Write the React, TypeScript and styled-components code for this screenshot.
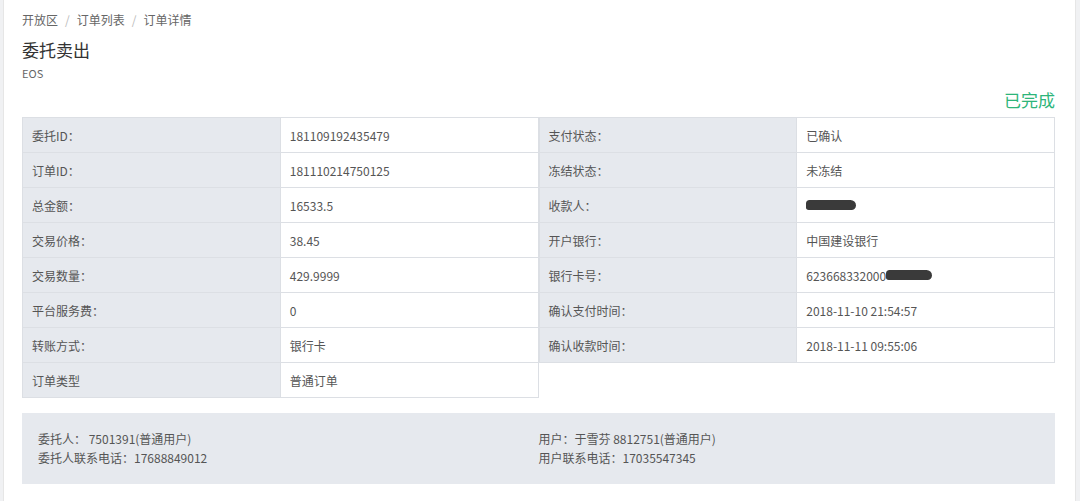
import { createGlobalStyle, styled } from "styled-components";

const GlobalStyle = createGlobalStyle`
  html, body {
    margin: 0;
    padding: 0;
    background: #f0f1f3;
  }
  body {
    font-family: "Noto Sans CJK SC", "Noto Sans", "Liberation Sans", sans-serif;
    color: #555;
  }
`;

const Page = styled.div`
  box-sizing: border-box;
  width: 1073px;
  min-height: 501px;
  margin-left: 3px;
  background: #fff;
  border-left: 1px solid #e6e6e6;
  border-right: 1px solid #e6e6e6;
  padding: 10px 20px 18px 18px;
`;

const Breadcrumb = styled.div`
  display: flex;
  align-items: center;
  font-size: 12px;
  line-height: 20px;
  color: #666;
`;

const Sep = styled.span`
  color: #bbb;
  margin: 0 7px;
`;

const Title = styled.h1`
  margin: 8px 0 0;
  font-size: 17px;
  font-weight: normal;
  line-height: 24px;
  color: #333;
`;

const Sub = styled.div`
  margin-top: 2px;
  font-size: 11px;
  line-height: 18px;
  color: #666;
`;

const StatusRow = styled.div`
  display: flex;
  justify-content: flex-end;
  align-items: flex-start;
  margin-top: 5px;
  height: 30px;
`;

const Status = styled.span`
  font-size: 17px;
  line-height: 26px;
  color: #2db57a;
`;

const Tables = styled.div`
  display: flex;
  align-items: flex-start;
`;

const Half = styled.div`
  flex: 1;
  border-top: 1px solid #dcdfe4;
  border-left: 1px solid #dcdfe4;
`;

const Row = styled.div`
  display: grid;
  grid-template-columns: 1fr 1fr;
  height: 34px;
  border-bottom: 1px solid #dcdfe4;
`;

const Label = styled.div`
  display: flex;
  align-items: center;
  padding: 0 9px;
  background: #e6e9ee;
  border-right: 1px solid #dcdfe4;
  font-size: 12px;
  color: #555;
`;

const Value = styled.div`
  display: flex;
  align-items: center;
  padding: 0 9px;
  background: #fff;
  border-right: 1px solid #dcdfe4;
  font-size: 12px;
  color: #555;
`;

const Redact = styled.span<{ $w: number }>`
  display: inline-block;
  width: ${(p) => p.$w}px;
  height: 10px;
  background: #3a3a3a;
  border-radius: 4px 6px 5px 3px;
`;

const Contacts = styled.div`
  display: grid;
  grid-template-columns: 1fr 1fr;
  margin-top: 15px;
  padding: 16px 16px 17px;
  background: #e6e9ee;
  font-size: 12px;
  line-height: 19px;
  color: #555;
`;

type Item = { label: string; value: React.ReactNode };

const left: Item[] = [
  { label: "委托ID：", value: "181109192435479" },
  { label: "订单ID：", value: "181110214750125" },
  { label: "总金额：", value: "16533.5" },
  { label: "交易价格：", value: "38.45" },
  { label: "交易数量：", value: "429.9999" },
  { label: "平台服务费：", value: "0" },
  { label: "转账方式：", value: "银行卡" },
  { label: "订单类型", value: "普通订单" },
];

const right: Item[] = [
  { label: "支付状态：", value: "已确认" },
  { label: "冻结状态：", value: "未冻结" },
  { label: "收款人：", value: <Redact $w={50} /> },
  { label: "开户银行：", value: "中国建设银行" },
  {
    label: "银行卡号：",
    value: (
      <>
        623668332000
        <Redact $w={46} />
      </>
    ),
  },
  { label: "确认支付时间：", value: "2018-11-10 21:54:57" },
  { label: "确认收款时间：", value: "2018-11-11 09:55:06" },
];

function InfoTable({ items }: { items: Item[] }) {
  return (
    <Half>
      {items.map((it) => (
        <Row key={it.label}>
          <Label>{it.label}</Label>
          <Value>{it.value}</Value>
        </Row>
      ))}
    </Half>
  );
}

export default function App() {
  return (
    <>
      <GlobalStyle />
      <Page>
        <Breadcrumb>
          <span>开放区</span>
          <Sep>/</Sep>
          <span>订单列表</span>
          <Sep>/</Sep>
          <span>订单详情</span>
        </Breadcrumb>
        <Title>委托卖出</Title>
        <Sub>EOS</Sub>
        <StatusRow>
          <Status>已完成</Status>
        </StatusRow>
        <Tables>
          <InfoTable items={left} />
          <InfoTable items={right} />
        </Tables>
        <Contacts>
          <div>
            <div>委托人： 7501391(普通用户)</div>
            <div>委托人联系电话：17688849012</div>
          </div>
          <div>
            <div>用户：于雪芬 8812751(普通用户)</div>
            <div>用户联系电话：17035547345</div>
          </div>
        </Contacts>
      </Page>
    </>
  );
}
